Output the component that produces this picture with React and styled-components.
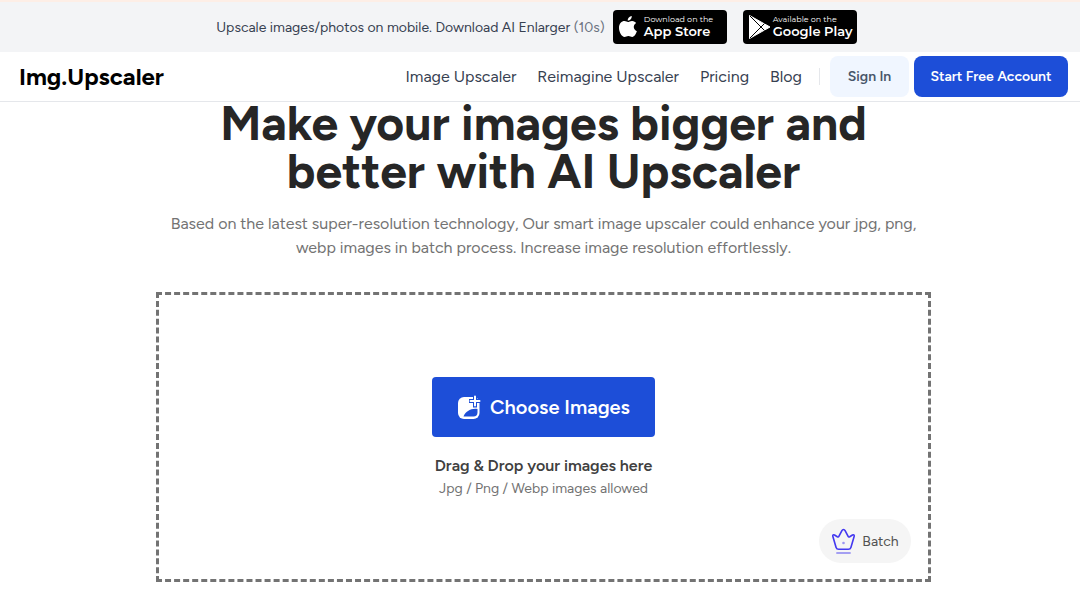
import { styled, createGlobalStyle } from 'styled-components';

const GlobalStyle = createGlobalStyle`
  * {
    box-sizing: border-box;
  }
  body {
    margin: 0;
    background-color: #ffffff;
    font-family: Figtree, Inter, sans-serif;
  }
  p, h1 {
    margin: 0;
  }
  a {
    text-decoration: none;
  }
  button {
    border: none;
    font-family: inherit;
    cursor: pointer;
  }
`;

const Banner = styled.div`
  height: 52px;
  padding-right: 7px;
  display: flex;
  align-items: center;
  justify-content: center;
  gap: 8px;
  background-color: #f3f4f6;
  border-top: 2px solid #fdeee6;
`;

const BannerText = styled.p`
  font-size: 14px;
  color: #374151;
  white-space: nowrap;
`;

const Countdown = styled.span`
  color: #6b7280;
`;

const StoreLinks = styled.div`
  display: flex;
  gap: 16px;
`;

const StoreLink = styled.a`
  width: 114px;
  height: 34px;
  padding-left: 5px;
  display: flex;
  align-items: center;
  gap: ${({ $gap }) => $gap};
  border-radius: 4px;
  background-color: #000000;
  color: #ffffff;
  font-family: Montserrat, Figtree, sans-serif;
`;

const StoreLabel = styled.span`
  padding-bottom: 2px;
  display: flex;
  flex-direction: column;
  white-space: nowrap;
`;

const StoreHint = styled.span`
  font-size: 8px;
  line-height: 10px;
`;

const StoreName = styled.span`
  font-size: 13px;
  line-height: 14px;
  font-weight: 600;
`;

const Header = styled.header`
  position: relative;
  z-index: 1;
  height: 50px;
  padding: 0 12px 0 19px;
  display: flex;
  align-items: center;
  justify-content: space-between;
  border-bottom: 1px solid #e5e7eb;
`;

const Logo = styled.a`
  font-size: 24px;
  line-height: 28px;
  font-weight: 700;
  color: #000000;
`;

const Nav = styled.nav`
  display: flex;
  align-items: center;
`;

const NavLinks = styled.div`
  padding-right: 17px;
  display: flex;
  gap: 21px;
`;

const NavLink = styled.a`
  font-size: 16px;
  line-height: 20px;
  color: #374151;
  white-space: nowrap;
`;

const Divider = styled.span`
  width: 1px;
  height: 17px;
  margin-right: 10px;
  background-color: #e5e7eb;
`;

const Actions = styled.div`
  display: flex;
  gap: 5px;
`;

const ActionButton = styled.button`
  width: ${({ $primary }) => ($primary ? '154px' : '79px')};
  height: 41px;
  padding: 0;
  border-radius: 8px;
  font-size: 14px;
  font-weight: 600;
  white-space: nowrap;
  background-color: ${({ $primary }) => ($primary ? '#1d4ed8' : '#f0f6ff')};
  color: ${({ $primary }) => ($primary ? '#ffffff' : '#475569')};
`;

const Main = styled.main`
  padding-left: 7px;
  display: flex;
  flex-direction: column;
  align-items: center;
  text-align: center;
`;

const Title = styled.h1`
  max-width: 720px;
  margin-top: -3px;
  font-size: 48px;
  line-height: 48px;
  font-weight: 700;
  color: #262626;
`;

const Description = styled.p`
  max-width: 768px;
  margin-top: 17px;
  font-size: 16px;
  line-height: 24px;
  color: #737373;
`;

const DropZone = styled.section`
  position: relative;
  width: 100%;
  max-width: 775px;
  height: 290px;
  margin-top: 32px;
  padding-top: 82px;
  display: flex;
  flex-direction: column;
  align-items: center;
  border: 3px dashed #737373;
`;

const ChooseButton = styled.button`
  width: 223px;
  height: 60px;
  padding: 0;
  display: flex;
  align-items: center;
  justify-content: center;
  gap: 8px;
  border-radius: 4px;
  background-color: #1d4ed8;
  color: #ffffff;
  font-size: 20px;
  font-weight: 600;
`;

const DropText = styled.p`
  margin-top: 17px;
  font-size: 16px;
  line-height: 24px;
  font-weight: 600;
  color: #404040;
`;

const FormatText = styled.p`
  font-size: 14px;
  line-height: 22px;
  color: #737373;
`;

const BatchButton = styled.button`
  position: absolute;
  right: 17px;
  bottom: 16px;
  width: 92px;
  height: 44px;
  padding: 0;
  display: flex;
  align-items: center;
  justify-content: center;
  gap: 6px;
  border-radius: 22px;
  background-color: #f5f5f5;
  color: #525252;
  font-size: 14px;
`;

function AppleIcon() {
  return (
    <svg width="20" height="24" viewBox="0 0 20 24" fill="#ffffff" aria-hidden="true">
      <path d="M13.8 1c.1 2.4-1.800 4.600-4.100 4.500C9.500 3.300 11.600 1.200 13.800 1z" />
      <path d="M10 7c1 0 2.300-1.200 4.200-1.100 1.800.1 3.100.9 3.900 2.100-3.500 2.200-2.900 6.700.8 8.200-.8 2.200-2.500 5.600-4.700 5.700-1.400 0-2-.9-3.800-.9s-2.400.9-3.800.9C3.700 21.900 1 17 1 13c0-4.300 2.700-6.900 5.500-6.900C8.100 6.100 9.200 7 10 7z" />
    </svg>
  );
}

function PlayIcon() {
  return (
    <svg width="23" height="26" viewBox="0 0 23 26" aria-hidden="true">
      <path d="M1.500 1.500L22 13 1.500 24.500z" fill="#ffffff" stroke="#ffffff" strokeLinejoin="round" />
      <path d="M2 2l14.500 14.500M2 24L16.500 9.500" fill="none" stroke="#000000" strokeWidth="1" />
    </svg>
  );
}

function ImagePlusIcon() {
  return (
    <svg width="25" height="25" viewBox="0 0 25 25" aria-hidden="true">
      <rect x="1" y="2" width="21.500" height="22" rx="6" fill="#ffffff" />
      <path d="M6.500 21.500c2-5 7.500-8.500 14-7.500v3.500c0 2.800-1.400 4-4 4z" fill="#1d4ed8" />
      <path d="M18 0v12.500M12 6H25" stroke="#1d4ed8" strokeWidth="4" />
      <path d="M18 1.500v9M13.500 6h9" stroke="#ffffff" strokeWidth="2" strokeLinecap="round" />
    </svg>
  );
}

function CrownIcon() {
  return (
    <svg width="25" height="28" viewBox="0 0 25 28" fill="none" stroke="#4338f0" aria-hidden="true">
      <path
        d="M10.900 3.600L8 9.200c-.4.8-1 .9-1.700.5L3.500 8c-1-.6-2 .1-1.700 1.200l3.300 11.200c.4 1.300 1.300 1.800 2.500 1.800h9.800c1.200 0 2.100-.5 2.500-1.800L23.200 9.200c.3-1.100-.7-1.800-1.700-1.200l-2.800 1.700c-.7.400-1.300.3-1.700-.5l-2.900-5.600c-.8-1.500-2.400-1.500-3.200 0z"
        strokeWidth="1.600"
        strokeLinejoin="round"
      />
      <circle cx="12.500" cy="16" r="1.300" fill="#4338f0" stroke="none" opacity=".5" />
      <path d="M6 26h13" strokeWidth="1.900" strokeLinecap="round" opacity=".45" />
    </svg>
  );
}

function Store({ icon, hint, name, gap }) {
  return (
    <StoreLink href="#" $gap={gap}>
      {icon}
      <StoreLabel>
        <StoreHint>{hint}</StoreHint>
        <StoreName>{name}</StoreName>
      </StoreLabel>
    </StoreLink>
  );
}

function App() {
  return (
    <>
      <GlobalStyle />
      <Banner>
        <BannerText>
          Upscale images/photos on mobile. Download AI Enlarger <Countdown>(10s)</Countdown>
        </BannerText>
        <StoreLinks>
          <Store icon={<AppleIcon />} hint="Download on the" name="App Store" gap="6px" />
          <Store icon={<PlayIcon />} hint="Available on the" name="Google Play" gap="2px" />
        </StoreLinks>
      </Banner>
      <Header>
        <Logo href="#">Img.Upscaler</Logo>
        <Nav>
          <NavLinks>
            <NavLink href="#">Image Upscaler</NavLink>
            <NavLink href="#">Reimagine Upscaler</NavLink>
            <NavLink href="#">Pricing</NavLink>
            <NavLink href="#">Blog</NavLink>
          </NavLinks>
          <Divider />
          <Actions>
            <ActionButton type="button">Sign In</ActionButton>
            <ActionButton type="button" $primary>Start Free Account</ActionButton>
          </Actions>
        </Nav>
      </Header>
      <Main>
        <Title>Make your images bigger and better with AI Upscaler</Title>
        <Description>
          Based on the latest super-resolution technology, Our smart image upscaler could enhance your jpg, png,
          webp images in batch process. Increase image resolution effortlessly.
        </Description>
        <DropZone>
          <ChooseButton type="button">
            <ImagePlusIcon />
            Choose Images
          </ChooseButton>
          <DropText>Drag &amp; Drop your images here</DropText>
          <FormatText>Jpg / Png / Webp images allowed</FormatText>
          <BatchButton type="button">
            <CrownIcon />
            Batch
          </BatchButton>
        </DropZone>
      </Main>
    </>
  );
}

export default App;
